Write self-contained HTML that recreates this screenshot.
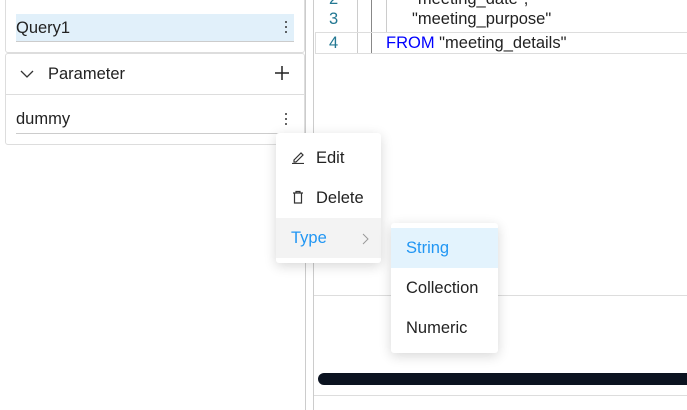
<!DOCTYPE html>
<html><head><style>
*{box-sizing:border-box;margin:0;padding:0}
body{width:687px;height:410px;background:#fff;position:relative;overflow:hidden;font-family:"Liberation Sans",sans-serif;color:#222;font-size:16.5px}
.a{position:absolute}
.dots{position:absolute;width:3px}
.dots i{display:block;width:2px;height:2px;background:#333;margin:0 0 3px 0;border-radius:1px}
</style></head><body>
<div class="a" style="left:5px;top:-2px;width:300px;height:55px;border:1px solid #ddd;border-top:none;border-radius:0 0 3px 3px"></div>
<div class="a" style="left:16px;top:14px;width:278px;height:28px;background:#e1f0fa;border-bottom:1px solid #ccc"></div>
<div class="a" style="left:16px;top:19px">Query1</div>
<div class="dots" style="left:285px;top:21px"><i></i><i></i><i></i></div>
<div class="a" style="left:5px;top:53px;width:300px;height:92px;border:1px solid #ddd;border-radius:3px"></div>
<div class="a" style="left:6px;top:94px;width:298px;height:1px;background:#ddd"></div>
<svg class="a" style="left:20px;top:69px" width="14" height="10"><path d="M1 2 L7 8 L13 2" stroke="#333" stroke-width="1.3" fill="none"/></svg>
<div class="a" style="left:48px;top:65px">Parameter</div>
<svg class="a" style="left:274px;top:65px" width="16" height="16"><path d="M8 1V15M1 8H15" stroke="#222" stroke-width="1.5"/></svg>
<div class="a" style="left:16px;top:110px">dummy</div>
<div class="a" style="left:16px;top:133px;width:278px;height:1px;background:#ccc"></div>
<div class="dots" style="left:285px;top:113px"><i></i><i></i><i></i></div>
<div class="a" style="left:305px;top:0;width:1px;height:410px;background:#ccc"></div>
<div class="a" style="left:313px;top:0;width:1px;height:410px;background:#ccc"></div>
<div class="a" style="left:357px;top:0;width:1px;height:53px;background:#ccc"></div>
<div class="a" style="left:371px;top:0;width:1px;height:53px;background:#888"></div>
<div class="a" style="left:386px;top:0;width:1px;height:32px;background:#ccc"></div>
<div class="a" style="left:315px;top:32px;width:372px;height:22px;border:1px solid #ddd;border-right:none"></div>
<div class="a" style="left:329px;top:-10px;color:#237893">2</div>
<div class="a" style="left:329px;top:10px;color:#237893">3</div>
<div class="a" style="left:329px;top:34px;color:#237893">4</div>
<div class="a" style="left:412px;top:-10px">"meeting_date",</div>
<div class="a" style="left:412px;top:10px">"meeting_purpose"</div>
<div class="a" style="left:386px;top:34px"><span style="color:#0000ff">FROM</span> "meeting_details"</div>
<div class="a" style="left:314px;top:295px;width:373px;height:1px;background:#ddd"></div>
<div class="a" style="left:318px;top:373px;width:380px;height:12px;background:#0b1320;border-radius:6px"></div>
<div class="a" style="left:314px;top:395px;width:373px;height:1px;background:#ddd"></div>
<div class="a" style="left:276px;top:133px;width:105px;height:130px;background:#fff;border-radius:3px;box-shadow:0 3px 12px rgba(0,0,0,.16)"></div>
<svg class="a" style="left:291px;top:150px" width="14" height="14"><path d="M3 10 L10 3 L12 5 L5 12 L3 12 Z" stroke="#333" stroke-width="1.2" fill="none"/><path d="M1 13.5H13" stroke="#333" stroke-width="1.2"/></svg>
<div class="a" style="left:316px;top:149px">Edit</div>
<svg class="a" style="left:292px;top:190px" width="12" height="14"><path d="M1 3H11M4 3V1.5H8V3M2.5 3V13H9.5V3" stroke="#333" stroke-width="1.2" fill="none"/></svg>
<div class="a" style="left:316px;top:189px">Delete</div>
<div class="a" style="left:276px;top:218px;width:105px;height:40px;background:#f3f3f3"></div>
<div class="a" style="left:291px;top:229px;color:#2196f3">Type</div>
<svg class="a" style="left:362px;top:233px" width="8" height="12"><path d="M1 1L6 6L1 11" stroke="#999" stroke-width="1" fill="none"/></svg>
<div class="a" style="left:391px;top:223px;width:107px;height:130px;background:#fff;border-radius:3px;box-shadow:0 3px 12px rgba(0,0,0,.16)"></div>
<div class="a" style="left:391px;top:228px;width:107px;height:40px;background:#e3f3fd"></div>
<div class="a" style="left:406px;top:239px;color:#2196f3">String</div>
<div class="a" style="left:406px;top:279px">Collection</div>
<div class="a" style="left:406px;top:319px">Numeric</div>
</body></html>
